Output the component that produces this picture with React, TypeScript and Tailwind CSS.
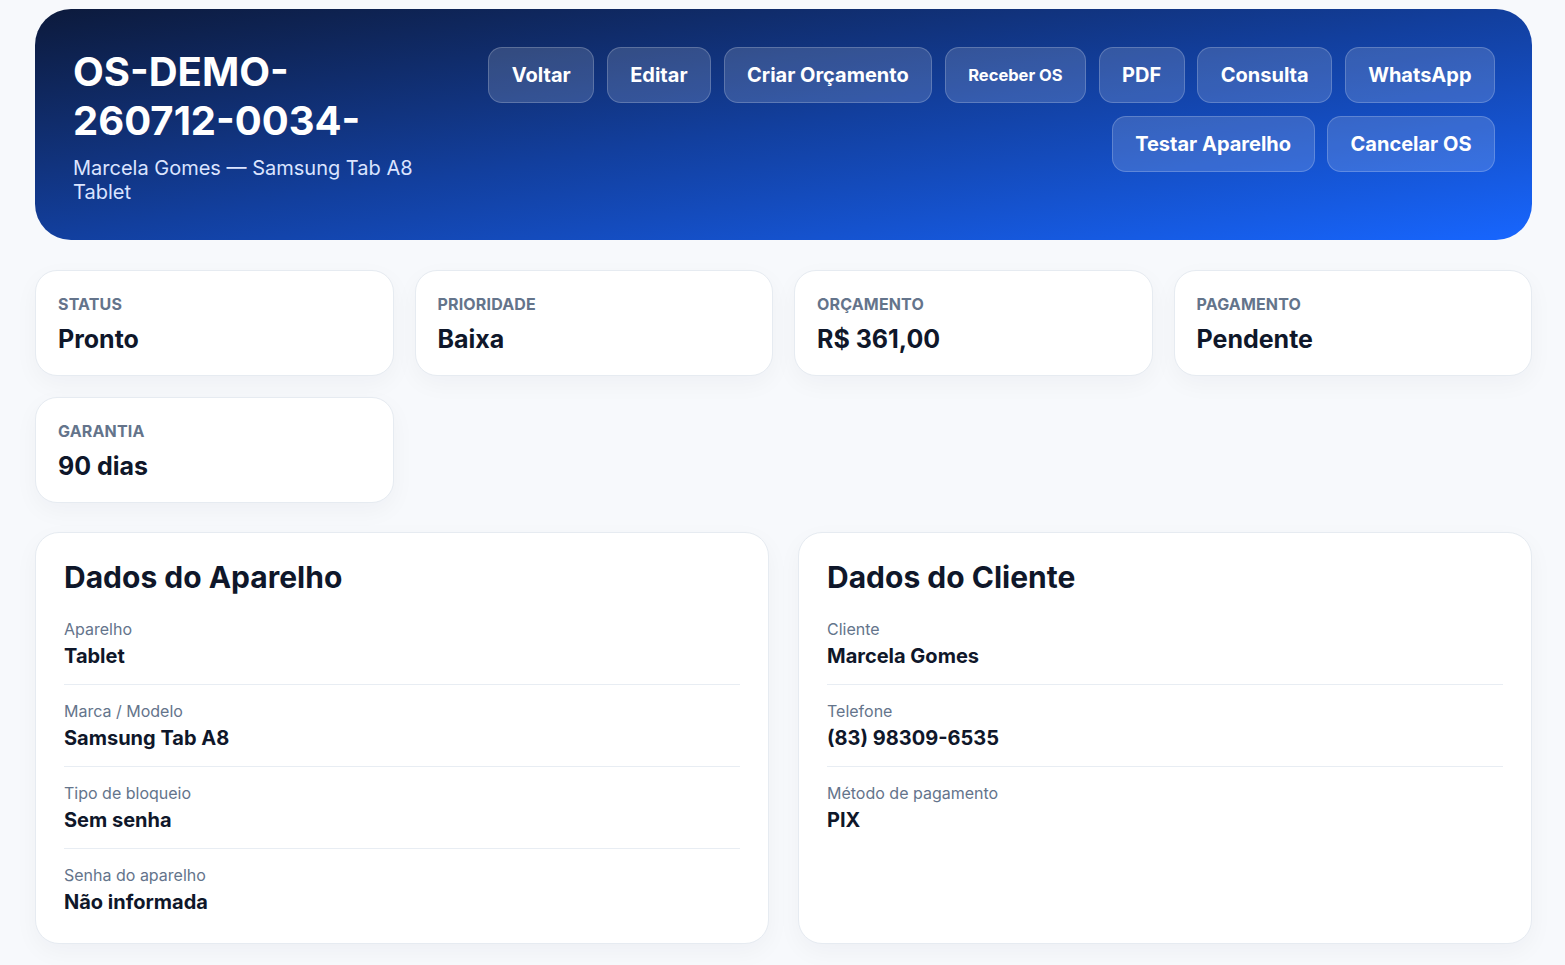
const stats = [
  { label: "Status", value: "Pronto" },
  { label: "Prioridade", value: "Baixa" },
  { label: "Orçamento", value: "R$ 361,00" },
  { label: "Pagamento", value: "Pendente" },
  { label: "Garantia", value: "90 dias" },
];

const aparelho = [
  { label: "Aparelho", value: "Tablet" },
  { label: "Marca / Modelo", value: "Samsung Tab A8" },
  { label: "Tipo de bloqueio", value: "Sem senha" },
  { label: "Senha do aparelho", value: "Não informada" },
];

const cliente = [
  { label: "Cliente", value: "Marcela Gomes" },
  { label: "Telefone", value: "(83) 98309-6535" },
  { label: "Método de pagamento", value: "PIX" },
];

function HeroButton({ children, small = false }: { children: React.ReactNode; small?: boolean }) {
  return (
    <button
      className={`h-14 px-[22.5px] rounded-[14px] bg-white/15 border border-white/20 text-white font-bold whitespace-nowrap ${
        small ? "text-[16.5px]" : "text-[20px]"
      }`}
    >
      {children}
    </button>
  );
}

function InfoCard({ title, rows }: { title: string; rows: { label: string; value: string }[] }) {
  return (
    <div className="bg-white rounded-[24px] border border-[#e6ebf1] shadow-[0_8px_24px_rgba(15,23,42,0.04)] pt-[26px] px-7 pb-[13px]">
      <h2 className="text-[30px] leading-9 font-bold text-[#0f172a] mb-[8px]">{title}</h2>
      {rows.map((r, i) => (
        <div
          key={r.label}
          className={`pt-[14px] pb-[14px] ${i < rows.length - 1 ? "border-b border-[#e8edf3]" : ""}`}
        >
          <div className="text-[16px] leading-6 text-[#64748b]">{r.label}</div>
          <div className="mt-[1px] text-[20px] leading-7 font-bold text-[#0f172a]">{r.value}</div>
        </div>
      ))}
    </div>
  );
}

export default function App() {
  return (
    <div
      className="min-h-screen bg-[#f7f9fc] pl-[35px] pr-[33px] pt-[9px] pb-8"
      style={{ fontFamily: "Inter, 'Noto Sans', sans-serif" }}
    >
      {/* Header */}
      <div className="rounded-[36px] bg-gradient-to-br from-[#0c1a3c] via-[#123f9e] to-[#1766ff] pl-[38px] pr-[37px] pt-[38px] pb-[36px] flex items-start justify-between gap-8">
        <div className="w-[360px] shrink-0">
          <h1 className="text-[40px] leading-[49px] font-bold text-white">
            OS-DEMO-
            <br />
            260712-0034-
          </h1>
          <p className="mt-[11px] text-[20px] leading-6 text-[#dbe4ff]">
            Marcela Gomes — Samsung Tab A8 Tablet
          </p>
        </div>
        <div className="flex-1 min-w-0 flex flex-wrap justify-end gap-x-[12.5px] gap-y-[13px]">
          <HeroButton>Voltar</HeroButton>
          <HeroButton>Editar</HeroButton>
          <HeroButton>Criar Orçamento</HeroButton>
          <HeroButton small>Receber OS</HeroButton>
          <HeroButton>PDF</HeroButton>
          <HeroButton>Consulta</HeroButton>
          <HeroButton>WhatsApp</HeroButton>
          <HeroButton>Testar Aparelho</HeroButton>
          <HeroButton>Cancelar OS</HeroButton>
        </div>
      </div>

      {/* Stats */}
      <div className="grid grid-cols-4 gap-[21px] mt-[30px]">
        {stats.map((s) => (
          <div
            key={s.label}
            className="bg-white rounded-[22px] border border-[#e6ebf1] shadow-[0_8px_24px_rgba(15,23,42,0.04)] px-[22px] pt-[23px] pb-[20px]"
          >
            <div className="text-[16px] leading-5 font-bold uppercase text-[#64748b] tracking-[0.01em]">
              {s.label}
            </div>
            <div className="mt-[9px] text-[25px] leading-8 font-bold text-[#0f172a]">{s.value}</div>
          </div>
        ))}
      </div>

      {/* Details */}
      <div className="grid grid-cols-2 gap-[29px] mt-[29px]">
        <InfoCard title="Dados do Aparelho" rows={aparelho} />
        <InfoCard title="Dados do Cliente" rows={cliente} />
      </div>
    </div>
  );
}
